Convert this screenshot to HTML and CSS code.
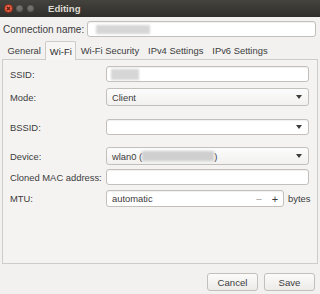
FILE: index.html
```html
<!DOCTYPE html>
<html lang="en">
<head>
    <meta charset="UTF-8">
    <title>Editing</title>
    <link rel="stylesheet" href="styles.css">
</head>
<body>
    <div class="window">
        <div class="titlebar">
            <div class="controls">
                <span class="btn close"><svg width="9" height="9" viewBox="0 0 9 9"><path d="M3 3l3 3M6 3l-3 3" stroke="#5a1a10" stroke-width="1.2"/></svg></span>
                <span class="btn"></span>
                <span class="btn"></span>
            </div>
            <span class="title">Editing</span>
        </div>

        <div class="conn-row">
            <label class="conn-label">Connection name:</label>
            <div class="entry conn-entry"><span class="blur blur-name"></span></div>
        </div>

        <div class="tabs">
            <span class="tab">General</span>
            <span class="tab active">Wi-Fi</span>
            <span class="tab">Wi-Fi Security</span>
            <span class="tab">IPv4 Settings</span>
            <span class="tab">IPv6 Settings</span>
        </div>

        <div class="panel">
            <div class="row r-ssid">
                <span class="label">SSID:</span>
                <div class="entry"><span class="blur blur-ssid"></span></div>
            </div>
            <div class="row r-mode">
                <span class="label">Mode:</span>
                <div class="combo"><span class="value">Client</span><span class="arrow"></span></div>
            </div>
            <div class="row r-bssid">
                <span class="label">BSSID:</span>
                <div class="entry combo-entry"><span class="value"></span><span class="arrow"></span></div>
            </div>
            <div class="row r-device">
                <span class="label">Device:</span>
                <div class="combo"><span class="value">wlan0 (<span class="blur blur-dev"></span>)</span><span class="arrow"></span></div>
            </div>
            <div class="row r-mac">
                <span class="label">Cloned MAC address:</span>
                <div class="entry"></div>
            </div>
            <div class="row r-mtu">
                <span class="label">MTU:</span>
                <div class="entry spin">
                    <span class="value">automatic</span>
                    <span class="spin-btn minus">&minus;</span>
                    <span class="spin-btn">+</span>
                </div>
                <span class="unit">bytes</span>
            </div>
        </div>

        <div class="actions">
            <button class="button">Cancel</button>
            <button class="button">Save</button>
        </div>
    </div>
</body>
</html>
```

FILE: styles.css
```css
* {
    margin: 0;
    padding: 0;
    box-sizing: border-box;
}

body {
    width: 320px;
    height: 294px;
    overflow: hidden;
    background: #f2f1f0;
    font-family: 'Liberation Sans', Arial, sans-serif;
    font-size: 9.4px;
    color: #3c3c3c;
}

.window {
    height: 294px;
    display: flex;
    flex-direction: column;
}

.titlebar {
    height: 17px;
    display: flex;
    align-items: center;
    background: linear-gradient(#45433e, #2f2e2a);
}

.controls {
    display: flex;
    gap: 2px;
    padding-left: 4px;
}

.btn {
    width: 9px;
    height: 9px;
    border-radius: 50%;
    background: radial-gradient(circle at 50% 40%, #7a7873, #55534f);
    border: 1px solid #3a3935;
    display: flex;
}

.btn svg {
    margin: -1px;
}

.btn.close {
    background: radial-gradient(circle at 50% 40%, #f47b5c, #d9452a);
    border-color: #9e2f1b;
}

.title {
    margin-left: 13px;
    color: #dfdbd2;
    font-weight: bold;
    font-size: 9.6px;
}

.conn-row {
    display: flex;
    align-items: center;
    padding: 4px 4px 0 3px;
    gap: 8px;
}

.conn-label {
    width: 76px;
    font-size: 10px;
    white-space: nowrap;
}

.entry {
    flex: 1;
    height: 16px;
    background: #fff;
    border: 1px solid #c3bfba;
    border-radius: 3px;
    box-shadow: inset 0 1px 1px rgba(0,0,0,0.06);
    display: flex;
    align-items: center;
    padding-left: 4px;
}

.blur {
    display: inline-block;
    background: #d6d6d6;
    filter: blur(1.2px);
    height: 9px;
}

.blur-name {
    width: 54px;
    margin-left: 4px;
}

.blur-ssid {
    width: 28px;
    height: 11px;
}

.blur-dev {
    width: 72px;
    height: 10px;
    vertical-align: middle;
    background: #cfcfcf;
}

.tabs {
    display: flex;
    align-items: flex-end;
    height: 21px;
    padding-left: 3px;
    margin-top: 1px;
}

.tab {
    padding: 4px 3.5px 3px;
    border: 1px solid transparent;
    border-bottom: none;
    white-space: nowrap;
}

.tab.active {
    background: #f7f6f5;
    border-color: #cfcbc6;
    border-radius: 2px 2px 0 0;
    position: relative;
    top: 1px;
    color: #2e2e2e;
}

.panel {
    margin: 0 2px;
    height: 205px;
    border: 1px solid #cfcbc6;
    background: #f4f3f2;
    padding: 6px 8px 0 6px;
}

.row {
    display: flex;
    align-items: center;
}

.label {
    width: 97px;
    flex-shrink: 0;
    padding-left: 1px;
    white-space: nowrap;
}

.r-mode { margin-top: 6px; }
.r-bssid { margin-top: 13px; }
.r-device { margin-top: 12px; }
.r-mac { margin-top: 4px; }
.r-mtu { margin-top: 5px; }
.r-mtu .entry { height: 17px; }

.combo {
    flex: 1;
    height: 18px;
    display: flex;
    align-items: center;
    border: 1px solid #c3bfba;
    border-radius: 3px;
    background: linear-gradient(#fcfcfc, #f2f1f0);
    padding: 0 6px 0 5px;
}

.value {
    flex: 1;
    display: flex;
    align-items: center;
    white-space: nowrap;
}

.arrow {
    width: 0;
    height: 0;
    border-left: 3.5px solid transparent;
    border-right: 3.5px solid transparent;
    border-top: 4px solid #3c3c3c;
}

.combo-entry {
    padding-right: 6px;
}

.spin {
    flex: 0 0 178px;
    padding-left: 5px;
}

.spin-btn {
    width: 16px;
    text-align: center;
    font-size: 11px;
    color: #3c3c3c;
}

.spin-btn.minus {
    color: #a8a6a2;
}

.unit {
    margin-left: 4px;
}

.actions {
    display: flex;
    justify-content: flex-end;
    gap: 6px;
    padding: 9px 5px 0 0;
}

.button {
    width: 51px;
    height: 18px;
    font-family: inherit;
    font-size: 9.6px;
    color: #3c3c3c;
    border: 1px solid #c3bfba;
    border-radius: 3px;
    background: linear-gradient(#fbfbfa, #ecebe9);
}
```
